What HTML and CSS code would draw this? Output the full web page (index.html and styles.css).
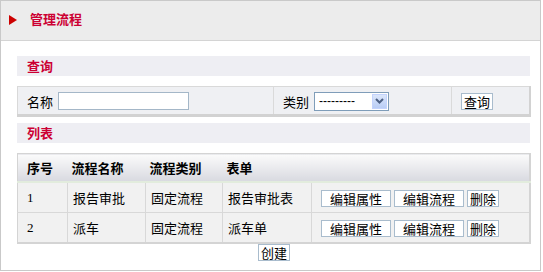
FILE: index.html
```html
<!DOCTYPE html>
<html lang="zh">
<head>
<meta charset="utf-8">
<title>管理流程</title>
<link rel="stylesheet" href="styles.css">
</head>
<body>
<div class="frame">
  <div class="page-head">
    <span class="tri"></span>
    <span class="page-title">管理流程</span>
  </div>
  <div class="content">
    <div class="bar">查询</div>
    <table class="search">
      <colgroup><col class="c1"><col class="c2"><col class="c3"></colgroup>
      <tr>
        <td><span class="lbl">名称</span><span class="input"></span></td>
        <td><span class="lbl">类别</span><span class="select"><span class="sel-text">---------</span><span class="sel-arrow"><svg width="9" height="6" viewBox="0 0 9 6"><path d="M1 1 L4.5 4.5 L8 1" fill="none" stroke="#4d6185" stroke-width="2"/></svg></span></span></td>
        <td><span class="btn">查询</span></td>
      </tr>
    </table>
    <div class="bar bar-list">列表</div>
    <table class="list">
      <colgroup><col class="l1"><col class="l2"><col class="l3"><col class="l4"><col class="l5"></colgroup>
      <thead>
        <tr><th class="first">序号</th><th>流程名称</th><th>流程类别</th><th>表单</th><th></th></tr>
      </thead>
      <tbody>
        <tr>
          <td class="first num">1</td><td>报告审批</td><td>固定流程</td><td>报告审批表</td>
          <td class="ops"><span class="btn w70">编辑属性</span><span class="btn w70">编辑流程</span><span class="btn">删除</span></td>
        </tr>
        <tr>
          <td class="first num">2</td><td>派车</td><td>固定流程</td><td>派车单</td>
          <td class="ops"><span class="btn w70">编辑属性</span><span class="btn w70">编辑流程</span><span class="btn">删除</span></td>
        </tr>
      </tbody>
    </table>
    <div class="create-row"><span class="btn">创建</span></div>
  </div>
</div>
</body>
</html>
```

FILE: styles.css
```css
html, body {
  margin: 0;
  padding: 0;
  background: #ffffff;
}
body {
  font-family: "Noto Sans CJK SC", "Liberation Sans", sans-serif;
  font-size: 12px;
  color: #000;
}
.frame {
  width: 539px;
  height: 269px;
  border: 1px solid #c9c9c9;
  background: #fff;
}
.page-head {
  height: 36px;
  padding-bottom: 3px;
  background: #ececec;
  border-bottom: 1px solid #d4d4d4;
  display: flex;
  align-items: center;
}
.tri {
  width: 0;
  height: 0;
  border-top: 5px solid transparent;
  border-bottom: 5px solid transparent;
  border-left: 8px solid #cc0000;
  margin-left: 8px;
  margin-top: 1px;
}
.page-title {
  margin-left: 13px;
  color: #cc0033;
  font-weight: bold;
  font-size: 13px;
  line-height: 16px;
}
.content {
  padding: 15px 10px 0 16px;
}
.bar {
  height: 20px;
  background: #eeeef3;
  color: #cc0033;
  font-weight: bold;
  font-size: 13px;
  line-height: 19px;
  padding-left: 10px;
}
.bar-list {
  margin-top: 6px;
}
.search {
  margin-top: 10px;
  width: 514px;
  border-collapse: collapse;
  table-layout: fixed;
  background: #eff0f3;
  border-top: 1px solid #d9d9d9;
  border-left: 1px solid #d9d9d9;
  border-right: 2px solid #d2d2d2;
  border-bottom: 3px solid #d2d2d2;
}
.search .c1 { width: 256px; }
.search .c2 { width: 178px; }
.search td {
  height: 27px;
  padding: 0 0 0 9px;
  border-left: 1px solid #dadada;
  vertical-align: middle;
  white-space: nowrap;
}
.search td:first-child { border-left: none; }
.lbl {
  display: inline-block;
  vertical-align: middle;
  font-size: 13px;
  margin-right: 5px;
}
.input {
  display: inline-block;
  vertical-align: middle;
  width: 129px;
  height: 16px;
  background: #fff;
  border: 1px solid #a4b7c8;
}
.select {
  display: inline-flex;
  vertical-align: middle;
  width: 73px;
  height: 17px;
  background: #fff;
  border: 1px solid #7f9db9;
  align-items: center;
  justify-content: space-between;
}
.sel-text {
  font-family: "Liberation Sans", sans-serif;
  font-size: 12px;
  padding-left: 4px;
  line-height: 15px;
}
.sel-arrow {
  width: 15px;
  height: 15px;
  margin-right: 1px;
  background: linear-gradient(#dbe6fb, #b9cdf5);
  border: 1px solid #c3d3fd;
  box-sizing: border-box;
  display: flex;
  align-items: center;
  justify-content: center;
}
.btn {
  display: inline-block;
  vertical-align: middle;
  height: 15px;
  line-height: 15px;
  padding: 0 2px;
  background: #fff;
  border: 1px solid #a9bccd;
  font-size: 13px;
  text-align: center;
  white-space: nowrap;
}
.search td:last-child { padding-left: 9px; }
.list {
  margin-top: 10px;
  width: 514px;
  border-collapse: collapse;
  table-layout: fixed;
  border-top: 1px solid #d4d4d4;
  border-right: 2px solid #d4d4d4;
  border-bottom: 2px solid #d4d4d4;
  border-left: 1px solid #d4d4d4;
}
.list .l1 { width: 50px; }
.list .l2 { width: 78px; }
.list .l3 { width: 77px; }
.list .l4 { width: 89px; }
.list th {
  height: 27px;
  text-align: left;
  font-size: 13px;
  font-weight: bold;
  padding: 0 0 0 4px;
  background: linear-gradient(#fbfbfb, #d8d9e0);
  border-bottom: 2px solid #e2ecdd;
}
.list th.first, .list td.first { padding-left: 9px; }
.list td {
  height: 29px;
  font-size: 13px;
  padding: 0 0 0 5px;
  background: #f1f1f1;
  border-left: 1px solid #d8d8d8;
  border-bottom: 1px solid #d8d8d8;
  white-space: nowrap;
}
.list td.first { border-left: none; }
.list td.num {
  font-family: "Liberation Serif", serif;
  font-size: 13px;
}
.list td.ops { padding-left: 9px; }
.ops .btn { margin-right: 3px; }
.btn.w70 { width: 64px; }
.create-row {
  display: flex;
  justify-content: center;
}
.create-row .btn { margin-left: 1px; }
```
